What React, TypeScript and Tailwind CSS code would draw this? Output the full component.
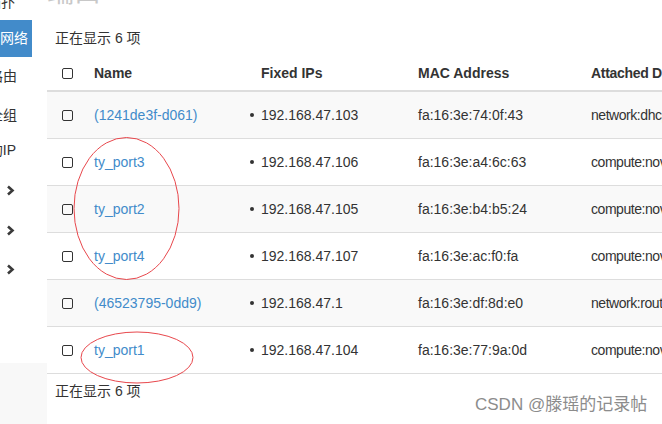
import React from "react";

const PORTS = [
  { name: "(1241de3f-d061)", ip: "192.168.47.103", mac: "fa:16:3e:74:0f:43", device: "network:dhcp" },
  { name: "ty_port3", ip: "192.168.47.106", mac: "fa:16:3e:a4:6c:63", device: "compute:nova" },
  { name: "ty_port2", ip: "192.168.47.105", mac: "fa:16:3e:b4:b5:24", device: "compute:nova" },
  { name: "ty_port4", ip: "192.168.47.107", mac: "fa:16:3e:ac:f0:fa", device: "compute:nova" },
  { name: "(46523795-0dd9)", ip: "192.168.47.1", mac: "fa:16:3e:df:8d:e0", device: "network:router_interface" },
  { name: "ty_port1", ip: "192.168.47.104", mac: "fa:16:3e:77:9a:0d", device: "compute:nova" },
];

const font = "font-['Liberation_Sans','Noto_Sans_CJK_SC',sans-serif]";

function Checkbox() {
  return <div className="h-[11px] w-[11px] rounded-[2px] border-[1.5px] border-[#333]" />;
}

function Chevron() {
  return (
    <svg width="9" height="11" viewBox="0 0 9 11" className="text-[#3a3a3a]">
      <path d="M2 1.5 L6.5 5.5 L2 9.5" fill="none" stroke="currentColor" strokeWidth="2.6" />
    </svg>
  );
}

function Sidebar() {
  return (
    <div className="flex w-[47px] shrink-0 flex-col">
      <div className="h-[363px] overflow-hidden bg-white text-[14px] text-[#333]">
        <div className="mt-[-16px] flex h-[36px] w-[15px] items-center justify-end whitespace-nowrap">网络拓扑</div>
        <div className="flex h-[37px] w-[32px] items-center justify-end whitespace-nowrap bg-[#428bca] pr-[4px] text-white">
          网络
        </div>
        <div className="flex h-[39px] w-[17px] items-center justify-end whitespace-nowrap">路由</div>
        <div className="flex h-[39px] w-[17px] items-center justify-end whitespace-nowrap">安全组</div>
        <div className="flex h-[30px] w-[16px] items-center justify-end whitespace-nowrap">浮动IP</div>
        <div className="mt-[5px] flex h-[40px] items-center pl-[6px]"><Chevron /></div>
        <div className="flex h-[40px] items-center pl-[6px]"><Chevron /></div>
        <div className="flex h-[39px] items-center pl-[6px]"><Chevron /></div>
      </div>
    </div>
  );
}

function Row({ p, striped }: { p: (typeof PORTS)[number]; striped: boolean }) {
  return (
    <div className={`flex h-[47px] items-center border-b border-[#ddd] text-[14px] text-[#333] ${striped ? "bg-[#f9f9f9]" : "bg-white"}`}>
      <div className="w-[39px] shrink-0 pl-[15px]"><Checkbox /></div>
      <div className="w-[159px] shrink-0 pl-[8px] text-[#428bca]">{p.name}</div>
      <div className="flex w-[165px] shrink-0 items-center pl-[5px]">
        <span className="h-[4px] w-[4px] rounded-full bg-[#333]" />
        <span className="ml-[7px]">{p.ip}</span>
      </div>
      <div className="w-[173px] shrink-0 pl-[8px]">{p.mac}</div>
      <div className="shrink-0 whitespace-nowrap pl-[8px] tracking-[-0.45px]">{p.device}</div>
    </div>
  );
}

export default function App() {
  return (
    <div className={`relative flex h-[424px] w-[662px] overflow-hidden bg-[#f8f8f8] ${font}`}>
      <Sidebar />
      <div className="flex min-w-0 flex-1 flex-col overflow-hidden bg-white">
        <h1 className="mt-[-22px] h-[30px] text-[27px] leading-[30px] text-[#c8c8c8]">端口</h1>
        <div className="mt-[20px] h-[20px] pl-[8px] text-[14px] leading-[20px] text-[#333]">正在显示 6 项</div>
        <div className="mt-[8px] w-[700px]">
          <div className="flex h-[36px] items-center border-b-2 border-[#ddd] text-[14px] font-bold text-[#333]">
            <div className="w-[39px] shrink-0 pl-[15px]"><Checkbox /></div>
            <div className="w-[159px] shrink-0 pl-[8px]">Name</div>
            <div className="w-[165px] shrink-0 pl-[16px]">Fixed IPs</div>
            <div className="w-[173px] shrink-0 pl-[8px]">MAC Address</div>
            <div className="shrink-0 whitespace-nowrap pl-[8px] tracking-[-0.3px]">Attached Device</div>
          </div>
          {PORTS.map((p, i) => (
            <Row key={p.name} p={p} striped={i % 2 === 0} />
          ))}
        </div>
        <div className="mt-[7px] h-[20px] pl-[8px] text-[14px] leading-[20px] text-[#333]">正在显示 6 项</div>
      </div>

      <svg className="pointer-events-none absolute left-0 top-0" width="662" height="424">
        <ellipse cx="126.5" cy="208.5" rx="52.5" ry="71" fill="none" stroke="#e8474c" strokeWidth="1" />
        <ellipse cx="137" cy="357.5" rx="56" ry="25.5" fill="none" stroke="#e8474c" strokeWidth="1" />
      </svg>

      <div className="pointer-events-none absolute left-[475px] top-[395px] text-[17px] leading-[20px] text-[#8c8c8c] [text-shadow:0_0_1px_#fff]">
        CSDN @滕瑶的记录帖
      </div>
    </div>
  );
}
